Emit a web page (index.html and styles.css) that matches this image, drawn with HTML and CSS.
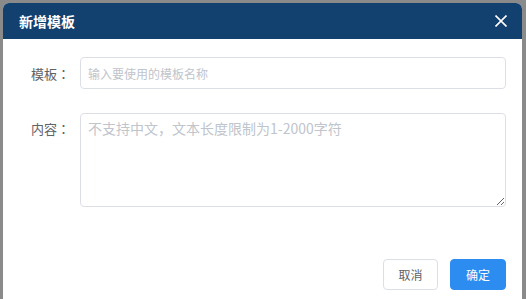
FILE: index.html
```html
<!DOCTYPE html>
<html lang="zh-CN">
<head>
  <meta charset="UTF-8">
  <title>新增模板</title>
  <link rel="stylesheet" href="styles.css">
</head>
<body>
  <div class="dialog">
    <div class="dialog-header">
      <span class="dialog-title">新增模板</span>
      <button class="dialog-close" aria-label="关闭">
        <svg width="12" height="12" viewBox="0 0 12 12">
          <path d="M0.5 0.5 L11.5 11.5 M11.5 0.5 L0.5 11.5" stroke="#fff" stroke-width="1.6" fill="none"/>
        </svg>
      </button>
    </div>

    <form class="dialog-body">
      <div class="form-row">
        <label class="form-label" lang="ja">模板：</label>
        <input type="text" class="form-input" placeholder="输入要使用的模板名称">
      </div>
      <div class="form-row top">
        <label class="form-label" lang="ja">内容：</label>
        <textarea class="form-textarea" placeholder="不支持中文，文本长度限制为1-2000字符"></textarea>
      </div>
    </form>

    <div class="dialog-footer">
      <button class="btn">取消</button>
      <button class="btn btn-primary">确定</button>
    </div>
  </div>
</body>
</html>
```

FILE: styles.css
```css
html, body {
  height: 100%;
}

body {
  font-family: "Noto Sans CJK SC", "Noto Sans", sans-serif;
  background: #8a8a8a;
  margin: 0;
  padding: 3px 4px 0 3px;
  box-sizing: border-box;
  overflow: hidden;
}

.dialog {
  background: #fff;
  border-radius: 6px 6px 0 0;
  height: 310px;
  overflow: hidden;
}

.dialog-header {
  height: 36px;
  background: #12406f;
  display: flex;
  align-items: center;
  justify-content: space-between;
  padding: 0 15px 0 16px;
}

.dialog-title {
  color: #fff;
  font-size: 14px;
  font-weight: bold;
}

.dialog-close {
  background: none;
  border: none;
  padding: 0;
  width: 12px;
  height: 12px;
  display: flex;
  cursor: pointer;
}

.dialog-body {
  padding: 18px 16px 0 16px;
  margin: 0;
}

.form-row {
  display: flex;
  align-items: center;
  margin-bottom: 24px;
}

.form-row.top {
  align-items: flex-start;
}

.form-label {
  width: 51px;
  flex: none;
  text-align: right;
  padding-right: 10px;
  font-family: "Noto Sans CJK JP", "Noto Sans CJK SC", sans-serif;
  font-size: 13px;
  color: #606266;
}

.form-row.top .form-label {
  padding-top: 6px;
}

.form-input,
.form-textarea {
  flex: 1;
  box-sizing: border-box;
  border: 1px solid #dcdfe6;
  border-radius: 4px;
  font-family: inherit;
  color: #606266;
  outline: none;
}

.form-input {
  height: 32px;
  padding: 0 7px;
  font-size: 12px;
}

.form-textarea {
  height: 94px;
  padding: 4px 7px;
  font-size: 14px;
  line-height: 20px;
  resize: vertical;
}

.form-input::placeholder,
.form-textarea::placeholder {
  color: #c0c4cc;
}

.dialog-footer {
  display: flex;
  justify-content: flex-end;
  gap: 12px;
  padding: 28px 16px 0 0;
}

.btn {
  width: 55px;
  height: 31px;
  border: 1px solid #dcdfe6;
  border-radius: 4px;
  background: #fff;
  color: #606266;
  font-family: inherit;
  font-size: 12px;
  cursor: pointer;
}

.btn-primary {
  width: 56px;
  background: #2d8cf0;
  border-color: #2d8cf0;
  color: #fff;
}
```
